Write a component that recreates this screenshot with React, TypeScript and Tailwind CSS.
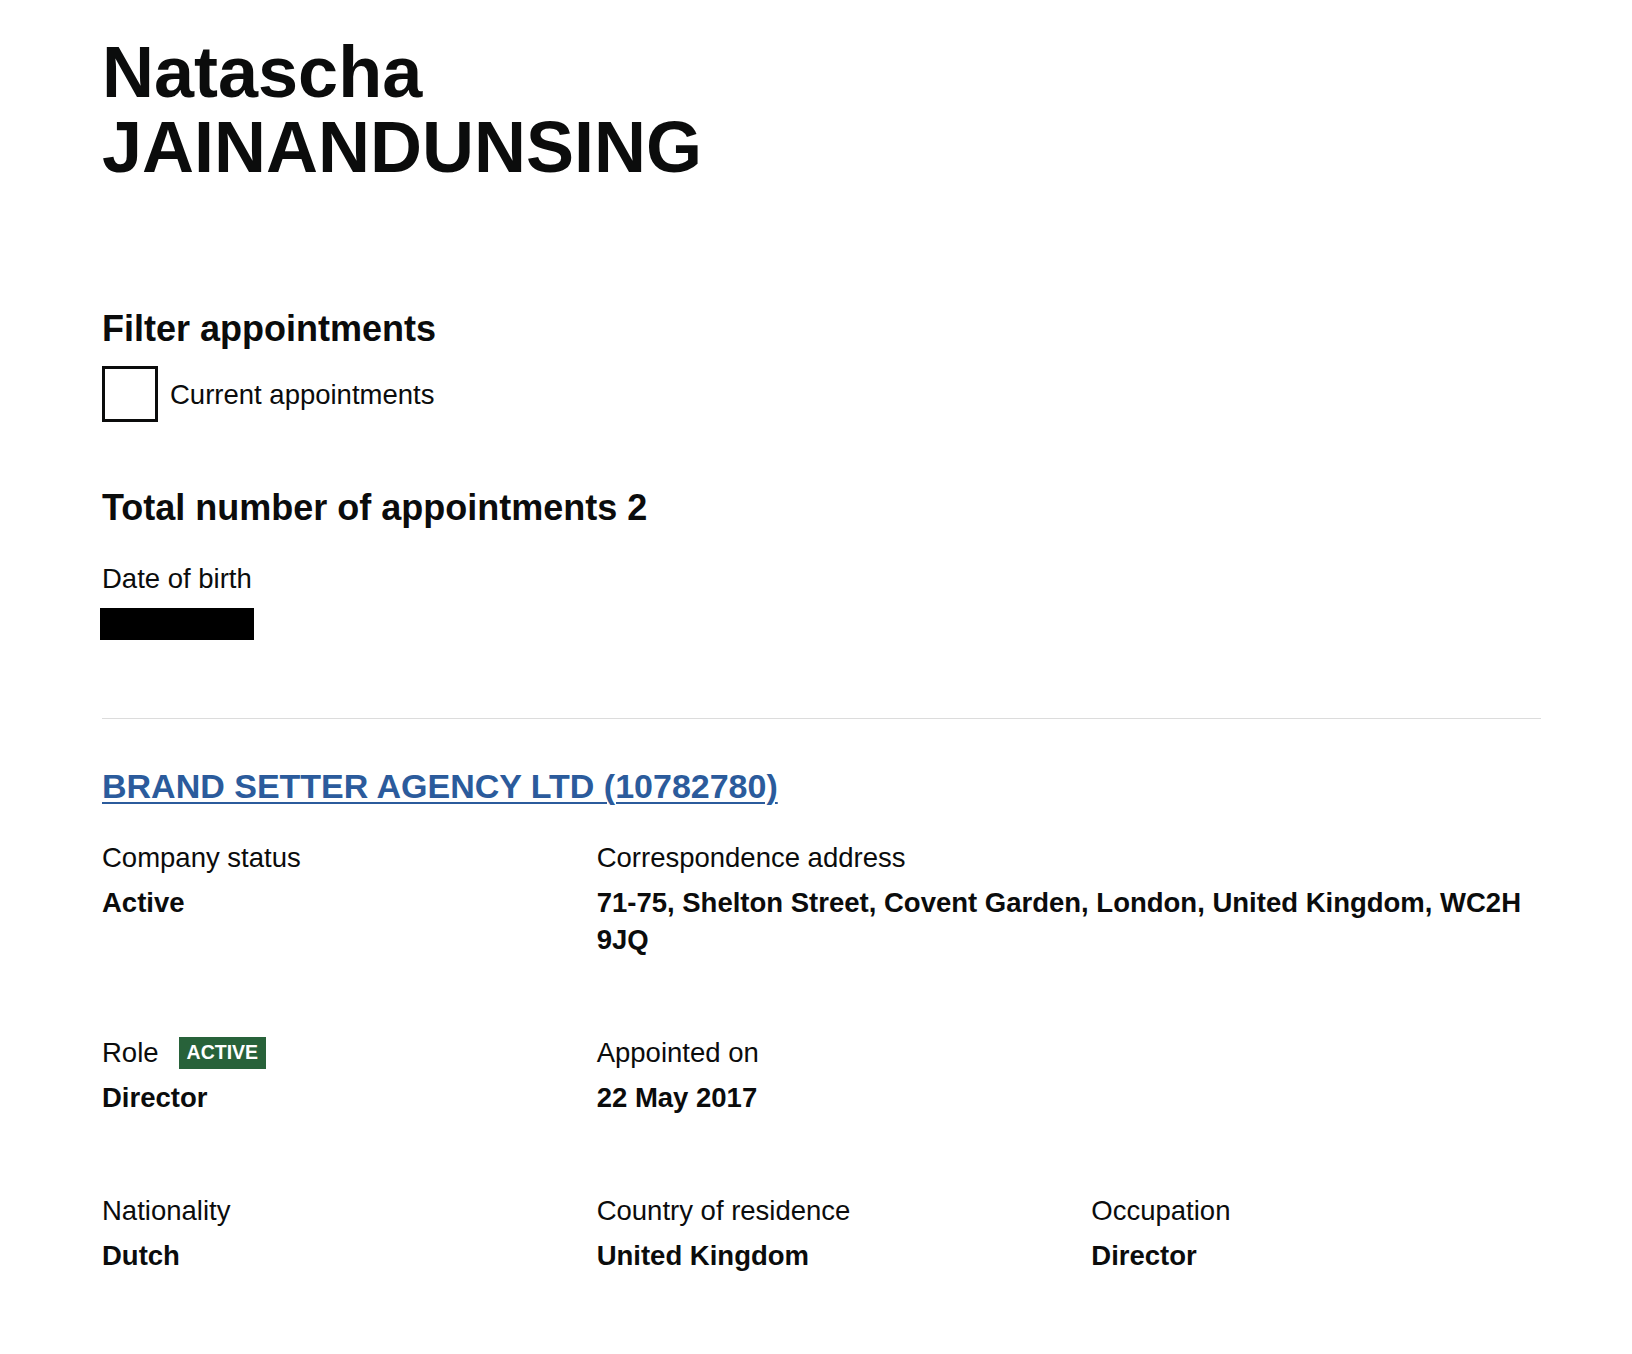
const body = "font-['Liberation_Sans',Arial,sans-serif]";

function Field({
  label,
  value,
  tag,
  className = "",
}: {
  label: string;
  value: string;
  tag?: string;
  className?: string;
}) {
  return (
    <div className={className}>
      <div className="flex items-center gap-[20px] text-[27.5px] leading-[37px]">
        <span>{label}</span>
        {tag && (
          <span className="flex h-[32px] items-center bg-[#28623a] px-[8px] text-[19.5px] leading-none font-bold text-white uppercase">
            {tag}
          </span>
        )}
      </div>
      <div className="mt-[8px] text-[27.5px] leading-[37px] font-bold">{value}</div>
    </div>
  );
}

export default function App() {
  return (
    <main className={`min-h-screen bg-white text-[#0b0c0c] ${body}`}>
      <div className="ml-[102px] w-[1439px] pt-[35px] pb-[80px]">
        <h1 className="text-[72px] leading-[75px] font-bold">
          Natascha
          <br />
          JAINANDUNSING
        </h1>

        <h2 className="mt-[121px] text-[36px] leading-[45px] font-bold">
          Filter appointments
        </h2>
        <label className="mt-[15px] flex items-center gap-[12px]">
          <span className="h-[56px] w-[56px] border-[3px] border-[#0b0c0c] bg-white" />
          <span className="text-[27.5px] leading-[37px]">Current appointments</span>
        </label>

        <h2 className="mt-[63px] text-[36px] leading-[45px] font-bold">
          Total number of appointments 2
        </h2>
        <div className="mt-[30px] text-[27.5px] leading-[37px]">Date of birth</div>
        <div className="-ml-[2px] mt-[11px] h-[32px] w-[154px] bg-black" />

        <hr className="mt-[78px] border-0 border-t border-[#dcdcdc]" />

        <h2 className="mt-[46px] text-[34px] leading-[42px] font-bold">
          <a
            href="#"
            className="text-[#2b5b9c] underline decoration-[2px] underline-offset-[4px]"
          >
            BRAND SETTER AGENCY LTD (10782780)
          </a>
        </h2>

        <div className="mt-[32px] grid grid-cols-3 gap-x-[45px] gap-y-[76px]">
          <Field label="Company status" value="Active" />
          <Field
            className="col-span-2"
            label="Correspondence address"
            value="71-75, Shelton Street, Covent Garden, London, United Kingdom, WC2H 9JQ"
          />
          <Field label="Role" tag="Active" value="Director" />
          <Field className="col-span-2" label="Appointed on" value="22 May 2017" />
          <Field label="Nationality" value="Dutch" />
          <Field label="Country of residence" value="United Kingdom" />
          <Field label="Occupation" value="Director" />
        </div>
      </div>
    </main>
  );
}
